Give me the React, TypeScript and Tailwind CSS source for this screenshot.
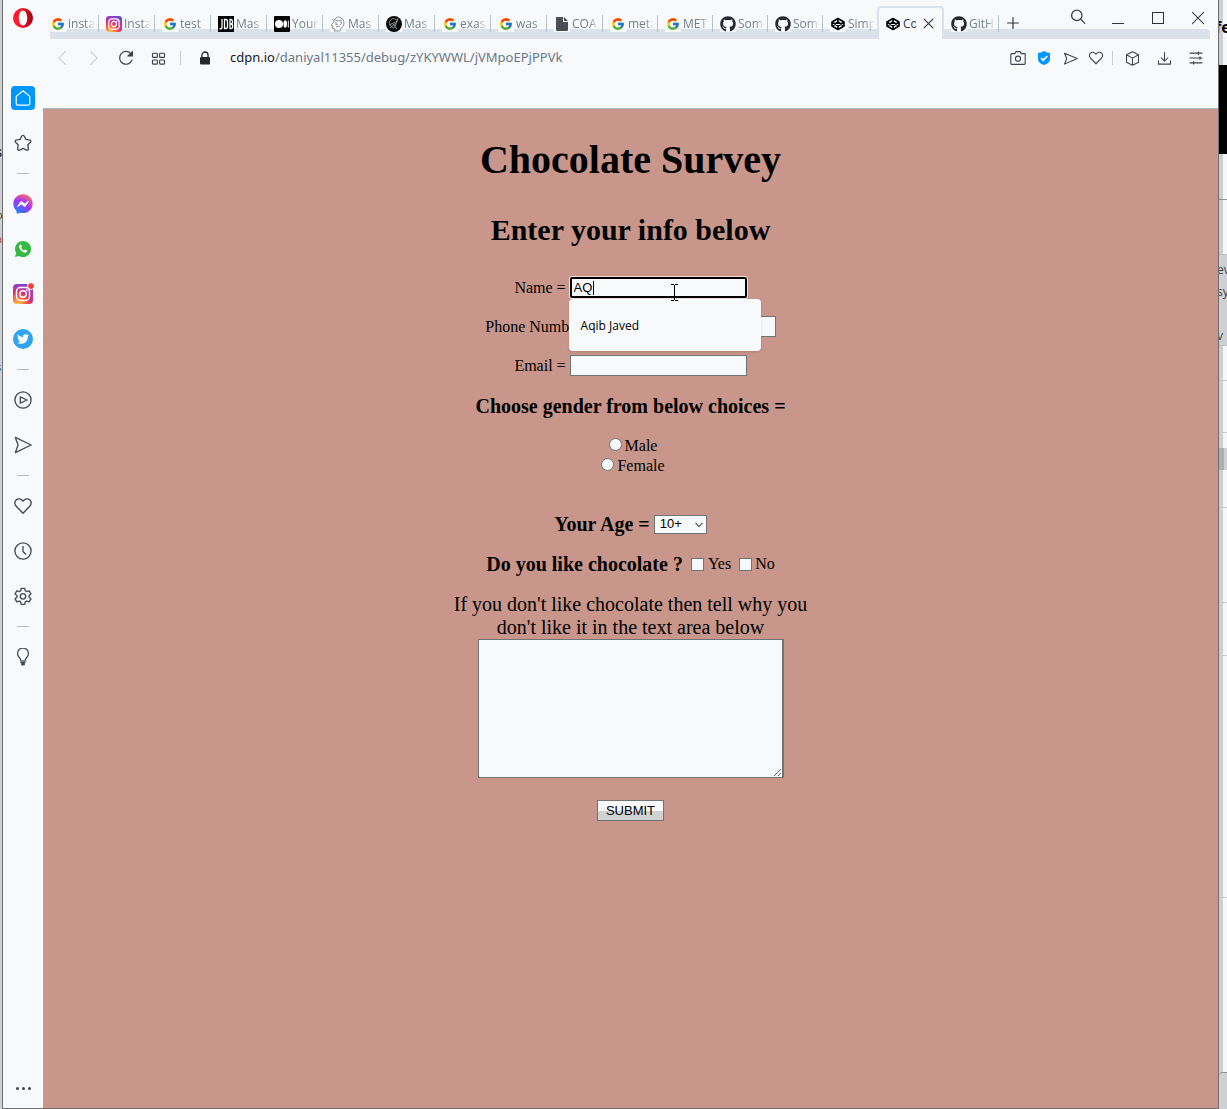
import React from "react";
import { FcGoogle } from "react-icons/fc";
import { FaGithub, FaTwitter, FaFacebookMessenger } from "react-icons/fa";

type IconProps = { children: React.ReactNode; size?: string; w?: number };

function Line({ children, size = "size-5", w = 1.2 }: IconProps) {
  return (
    <svg viewBox="0 0 20 20" className={size} fill="none" stroke="currentColor" strokeWidth={w} strokeLinejoin="round" strokeLinecap="round" aria-hidden="true">
      {children}
    </svg>
  );
}

const heartPath = "M10 17.2 3.2 10.2C1.3 8.2 1.4 5.4 3.1 3.9 5 2.2 8 2.5 10 5.2 12 2.5 15 2.2 16.9 3.9 18.6 5.4 18.7 8.2 16.8 10.2Z";
const sendPath = "M1.5 1.5 19 10 1.5 18.500 4.500 10Z";

function InstagramLogo({ size }: { size: string }) {
  return (
    <svg viewBox="0 0 20 20" className={size} aria-hidden="true">
      <defs>
        <radialGradient id="ig" cx="0.25" cy="1.05" r="1.15">
          <stop offset="0" stopColor="#ffd45a" />
          <stop offset="0.28" stopColor="#fd7f3c" />
          <stop offset="0.55" stopColor="#e0306c" />
          <stop offset="0.8" stopColor="#a837c0" />
          <stop offset="1" stopColor="#5a4fd0" />
        </radialGradient>
      </defs>
      <rect width="20" height="20" rx="4" fill="url(#ig)" />
      <rect x="3.5" y="3.5" width="13" height="13" rx="4" fill="none" stroke="#fff" strokeWidth="1.5" />
      <circle cx="10" cy="10" r="3.2" fill="none" stroke="#fff" strokeWidth="1.5" />
      <circle cx="13.9" cy="6.2" r="0.9" fill="#fff" />
    </svg>
  );
}

function JdbLogo() {
  return (
    <svg viewBox="0 0 16 16" className="size-4" aria-hidden="true">
      <rect width="16" height="16" fill="#000" />
      <path d="M4 3v8.500q0 1.500-2.500 1.200M6.500 3.500v9h1q2 0 2-2v-5q0-2-2-2zM12 3.500v9h1q1.700 0 1.700-2.200T13 8q1.500 0 1.500-2.200T13 3.500zM12 8h1" fill="none" stroke="#fff" strokeWidth="1.3" />
    </svg>
  );
}

function MediumLogo() {
  return (
    <svg viewBox="0 0 16 16" className="size-4" aria-hidden="true">
      <rect width="16" height="16" rx="1" fill="#000" />
      <circle cx="5" cy="8" r="4" fill="#fff" />
      <ellipse cx="11.2" cy="8" rx="1.8" ry="3.7" fill="#fff" />
      <rect x="13.8" y="4.5" width="1" height="7" fill="#fff" />
    </svg>
  );
}

function SketchLogo() {
  return (
    <svg viewBox="0 0 16 16" className="size-4" fill="none" stroke="#8b8b8b" strokeWidth="0.9" aria-hidden="true">
      <path d="M4 4Q8-1 11 2q3 1 3 5 0 4-3 5l-1 3H4l1-2-3-1 1-2-2-1 3-3zM5 4l3 1 4-1M6 6v3l2-1M10 6l2 1-2 2M6 11l4-1M2 3l2 2" />
    </svg>
  );
}

function KnotLogo() {
  return (
    <svg viewBox="0 0 16 16" className="size-4" aria-hidden="true">
      <circle cx="8" cy="8" r="8" fill="#080808" />
      <path d="M4 5q2-4 5-2t3 0-2 5-5 2-1-5zM3 9l9-4M7 8l4 5M4 12l6-5" fill="none" stroke="#a5a5a5" strokeWidth="0.8" />
    </svg>
  );
}

function PageLogo() {
  return (
    <svg viewBox="0 0 16 16" className="size-4" fill="#4b4e50" aria-hidden="true">
      <path d="M3 1h6v5h5v8q0 1-1 1H3q-1 0-1-1V2q0-1 1-1zM10 1l4 4h-4z" />
    </svg>
  );
}

function CodepenLogo() {
  return (
    <svg viewBox="0 0 16 16" className="size-4 shrink-0" fill="none" stroke="#000" strokeWidth="1.6" strokeLinejoin="round" aria-hidden="true">
      <path d="M8 2.500 14 6v4l-6 3.500L2 10V6zM2 6l6 4 6-4M2 10l6-4 6 4M8 2.500V6M8 10v3.500" />
    </svg>
  );
}

function OperaLogo() {
  return (
    <svg viewBox="0 0 20 20" className="size-5" aria-label="Opera" role="img">
      <defs>
        <linearGradient id="op" x1="0" x2="1">
          <stop offset="0.3" stopColor="#ff1b2d" />
          <stop offset="1" stopColor="#a3000f" />
        </linearGradient>
      </defs>
      <path fillRule="evenodd" fill="url(#op)" d="M10 0a10 10 0 1 1 0 20 10 10 0 0 1 0-20zM10 2.500c-2.500 0-4.200 3.200-4.200 7.500s1.700 7.500 4.200 7.500 4.200-3.200 4.200-7.500-1.700-7.500-4.200-7.500z" />
    </svg>
  );
}

const google = <FcGoogle className="size-[14px]" />;
const github = <FaGithub className="size-4 text-[#24292f]" />;

const wideTabs: [React.ReactNode, string][] = [
  [google, "insta"],
  [<InstagramLogo size="size-4" />, "Insta"],
  [google, "test"],
  [<JdbLogo />, "Mas"],
  [<MediumLogo />, "Your"],
  [<SketchLogo />, "Mas"],
  [<KnotLogo />, "Mas"],
  [google, "exas"],
  [google, "was"],
  [<PageLogo />, "COA"],
];
const narrowTabs: [React.ReactNode, string][] = [
  [google, "meta"],
  [google, "MET"],
  [github, "Som"],
  [github, "Som"],
  [<CodepenLogo />, "Simp"],
];

function Tab({ icon, label, wide, last }: { icon: React.ReactNode; label: string; wide?: boolean; last?: boolean }) {
  return (
    <button className={`${wide ? "w-14" : "w-[55px]"} flex h-full shrink-0 items-center pt-2 pl-[7px] text-left`}>
      <span className="flex size-4 shrink-0 items-center justify-center bg-[#f7f9fb]">{icon}</span>
      <span className="ml-[2px] flex h-4 flex-1 items-center overflow-hidden whitespace-nowrap text-[12px] text-[#717f8c] [mask-image:linear-gradient(to_right,black_65%,transparent)]">{label}</span>
      <span className={`ml-[3px] h-[17px] w-px ${last ? "bg-transparent" : "bg-[#b4c2cf]"}`} />
    </button>
  );
}

function TabStrip() {
  return (
    <div className="relative flex h-[39px] shrink-0">
      <div className="absolute right-2 bottom-0 left-[7px] h-[10px] rounded-tr-sm bg-[#dbe2e9]" />
      <div className="relative flex min-w-0 flex-1">
        {wideTabs.map(([icon, label], i) => (
          <Tab key={i} icon={icon} label={label} wide />
        ))}
        {narrowTabs.map(([icon, label], i) => (
          <Tab key={i} icon={icon} label={label} last={i === 4} />
        ))}
        <div className="mt-[6px] -ml-px flex w-[67px] shrink-0 items-center rounded-t border-2 border-b-0 border-[#dbe2e9] bg-[#f7f9fb] pl-[6px]">
          <CodepenLogo />
          <span className="ml-[2px] w-[13px] overflow-hidden text-[12px] whitespace-nowrap text-[#30343a]">Cod</span>
          <button aria-label="Close tab" className="ml-[7px] text-[#30343a]">
            <Line size="size-[11px]" w={2}><path d="M2 2 18 18M18 2 2 18" /></Line>
          </button>
        </div>
        <Tab icon={github} label="GitH" />
        <button aria-label="New tab" className="ml-2 pt-[6px] text-[#30343a]">
          <Line size="size-3" w={2}><path d="M10 1V19M1 10H19" /></Line>
        </button>
      </div>
      <div className="relative flex h-9 shrink-0 text-[#3b3f46]">
        <button aria-label="Search tabs" className="flex w-10 items-center justify-center pb-[2px]">
          <Line size="size-4" w={1.6}><circle cx="8.5" cy="8" r="6.5" /><path d="m13.300 12.700 5.200 5.300" /></Line>
        </button>
        <button aria-label="Minimize" className="flex w-10 items-center justify-center pt-[11px]"><span className="h-px w-3 bg-[#30343a]" /></button>
        <button aria-label="Maximize" className="flex w-10 items-center justify-center"><span className="size-3 border border-[#30343a]" /></button>
        <button aria-label="Close window" className="flex w-10 items-center justify-center">
          <Line size="size-[14px]" w={1.5}><path d="M2 2 18 18M18 2 2 18" /></Line>
        </button>
      </div>
    </div>
  );
}

function AddressBar() {
  return (
    <div className="flex h-[38px] shrink-0 items-center pr-[6px] pl-[3px] text-[#3b444e]">
      <button aria-label="Back" className="flex w-8 justify-center text-[#c3c9cf]"><Line size="size-4" w={1.3}><path d="M14 2 6 10l8 8" /></Line></button>
      <button aria-label="Forward" className="flex w-8 justify-center text-[#c3c9cf]"><Line size="size-4" w={1.3}><path d="m6 2 8 8-8 8" /></Line></button>
      <button aria-label="Reload" className="flex w-8 justify-center">
        <Line size="size-4" w={1.5}><path d="M17.500 12.500A8 8 0 1 1 16 4.500" /><path d="M18 2v5.500h-5.500z" fill="currentColor" /></Line>
      </button>
      <button aria-label="Speed dial" className="flex w-8 justify-center">
        <Line size="size-[15px]" w={1.5}><rect x="2" y="3" width="6.5" height="5.5" rx="1" /><rect x="11.5" y="3" width="6.5" height="5.5" rx="1" /><rect x="2" y="12" width="6.5" height="5.5" rx="1" /><rect x="11.5" y="12" width="6.5" height="5.5" rx="1" /></Line>
      </button>
      <span className="ml-[6px] h-[14px] w-px bg-[#c9ced3]" />
      <svg viewBox="0 0 12 16" className="ml-[18px] h-4 w-3 text-[#25282c]" aria-label="Secure" role="img">
        <rect x="1" y="7" width="10" height="7.5" rx="1" fill="currentColor" />
        <path d="M3 8V5a3 3 0 0 1 6 0v3" fill="none" stroke="currentColor" strokeWidth="1.3" />
      </svg>
      <div className="ml-[19px] min-w-0 flex-1 truncate font-['Noto_Sans',sans-serif] text-[13px] text-[#6b7886]">
        <span className="text-[#16191c]">cdpn.io</span>/daniyal11355/debug/zYKYWWL/jVMpoEPjPPVk
      </div>
      <button aria-label="Snapshot" className="flex w-[26px] justify-center">
        <Line size="size-4" w={1.4}><path d="M2 4.500h4L7.500 2h5L14 4.500h4q1 0 1 1V17q0 1-1 1H2q-1 0-1-1V5.500q0-1 1-1z" /><circle cx="10" cy="10.8" r="3.2" /></Line>
      </button>
      <button aria-label="Ad blocker" className="flex w-[26px] justify-center">
        <svg viewBox="0 0 14 16" className="h-4 w-[14px]"><path d="M7 1q3 2 6 2v6q0 4-6 6-6-2-6-6V3q3 0 6-2z" fill="#0096ff" /><path d="m4 8 2.200 2.200L10.300 6" fill="none" stroke="#fff" strokeWidth="1.7" /></svg>
      </button>
      <button aria-label="Send" className="flex w-[26px] justify-center"><Line size="size-[15px]" w={1.4}><path d="M2 3 19 10 2 17.500 5 10z" /></Line></button>
      <button aria-label="Bookmark" className="flex w-[26px] justify-center"><Line size="size-4" w={1.4}><path d={heartPath} /></Line></button>
      <span className="mx-[3px] h-[14px] w-px bg-[#c9ced3]" />
      <button aria-label="Extensions" className="flex w-8 justify-center"><Line size="size-[15px]" w={1.4}><path d="m10 1 8 4v10l-8 4-8-4V5zM2 5l8 4.500L18 5M10 9.500V19" /></Line></button>
      <button aria-label="Downloads" className="flex w-8 justify-center"><Line size="size-[15px]" w={1.4}><path d="M10 2v11M5.500 9l4.500 4.500L14.500 9M2 13v4.500h16V13" /></Line></button>
      <button aria-label="Easy setup" className="flex w-8 justify-center"><Line size="size-4" w={1.5}><path d="M2.500 4h15M2.500 10h15M2.500 16h15M13 2.500v3M15 8.500v3M7 14.500v3" /></Line></button>
    </div>
  );
}

function Side({ label, children }: { label: string; children: React.ReactNode }) {
  return <button aria-label={label} className="flex h-[45px] w-full shrink-0 items-center justify-center">{children}</button>;
}

function Dash() {
  return <div className="flex h-4 w-full items-center justify-center"><span className="h-px w-3 bg-[#aebdcb]" /></div>;
}

function Sidebar() {
  return (
    <nav aria-label="Sidebar" className="flex w-10 shrink-0 flex-col items-center bg-[#f7f9fb] pt-2 text-[#414d59]">
      <OperaLogo />
      <div className="h-[47px]" />
      <Side label="Speed dial">
        <span className="flex size-6 items-center justify-center rounded-sm bg-[#0096ff] text-white">
          <Line size="size-4" w={1.5}><path d="M10 1 18.500 8v9q0 2-2 2h-13q-2 0-2-2V8z" /></Line>
        </span>
      </Side>
      <Side label="Bookmarks">
        <Line size="size-[18px]" w={1.5}><path d="M8.600 2.300q1.400-1.600 2.800 0L13.200 6l4.600.8q1.500.9.500 2.300L15.400 12l.6 4.800q-.3 1.500-2 1.200L10 16l-4 2q-1.700.3-2-1.200l.6-4.800L1.700 9.100q-1-1.400.5-2.300L6.800 6z" /></Line>
      </Side>
      <Dash />
      <Side label="Messenger">
        <svg width="0" height="0" className="absolute"><defs><radialGradient id="ms" cx="0.2" cy="1" r="1.1"><stop offset="0" stopColor="#0a8fff" /><stop offset="0.6" stopColor="#a035ff" /><stop offset="1" stopColor="#ff6968" /></radialGradient></defs></svg>
        <FaFacebookMessenger className="size-5 [&_path]:fill-[url(#ms)]" />
      </Side>
      <Side label="WhatsApp">
        <svg viewBox="0 0 18 18" className="size-[18px]"><path d="M9 1a8 8 0 1 1-4 14.900L1 17l1.100-4A8 8 0 0 1 9 1z" fill="#35b944" /><path d="M5.200 5.500q1-1.500 2-.8l.8 1.900-.8 1.200q1 2 2.800 2.600l1.100-1 2 1q.3 1.600-1.400 2.200-2 .5-4.600-1.900Q4.500 8 5.200 5.500z" fill="#fff" /></svg>
      </Side>
      <Side label="Instagram">
        <span className="relative"><InstagramLogo size="size-5" /><span className="absolute -top-px -right-px size-[6px] rounded-full bg-[#ff3b30] outline-1 outline-[#f7f9fb]" /></span>
      </Side>
      <Side label="Twitter"><span className="flex size-5 items-center justify-center rounded-full bg-[#2ea3ef] text-white"><FaTwitter className="size-3" /></span></Side>
      <Dash />
      <Side label="Player"><Line size="size-[18px]" w={1.5}><circle cx="10" cy="10" r="9" /><path d="m7 6.500 7.500 3.500L7 13.500z" /></Line></Side>
      <Side label="My Flow"><Line size="size-[18px]" w={1.5}><path d={sendPath} /></Line></Side>
      <Dash />
      <Side label="Favorites"><Line size="size-5" w={1.4}><path d={heartPath} /></Line></Side>
      <Side label="History"><Line size="size-[18px]" w={1.5}><circle cx="10" cy="10" r="9" /><path d="M10 5v5.500l3 3" /></Line></Side>
      <Side label="Settings">
        <Line size="size-[18px]" w={1.5}><path d="M8 1.500h4l.5 2.700 1.700 1 2.600-1 2 3.500-2.100 1.700v1.900l2.100 1.800-2 3.400-2.600-.9-1.700 1-.5 2.700H8l-.5-2.700-1.700-1-2.600.9-2-3.400 2.100-1.800V9.400L1.200 7.700l2-3.500 2.600 1 1.700-1z" /><circle cx="10" cy="10.4" r="3" /></Line>
      </Side>
      <Dash />
      <Side label="Tips"><Line size="size-[18px]" w={1.4}><path d="M7.500 14.500q0-2.500-2-4.500a6 6 0 1 1 9 0q-2 2-2 4.500z" /><path d="M8 16.500h4M8.800 18.500h2.400" strokeWidth="1.8" /></Line></Side>
      <button aria-label="Sidebar setup" className="mt-auto mb-[18px] flex gap-[3px]">
        <span className="size-[3px] rounded-full bg-[#414446]" />
        <span className="size-[3px] rounded-full bg-[#414446]" />
        <span className="size-[3px] rounded-full bg-[#414446]" />
      </button>
    </nav>
  );
}

const plainField = "h-[21px] w-[177px] border border-[#6f7475] bg-[#f7f9fb] px-[3px] font-['Liberation_Sans',sans-serif] text-[13px] outline-none";
const focusedField = "h-[21px] w-[177px] rounded-xs border-2 border-black bg-[#f7f9fb] px-[2px] font-['Liberation_Sans',sans-serif] text-[13px] ring-1 ring-white/70 outline-none";
const radio = "mt-[2px] ml-[5px] size-[13px] appearance-none rounded-full border border-[#6f7475] bg-[#f7f9fb]";
const checkbox = "size-[13px] appearance-none border border-[#6f7475] bg-[#f7f9fb]";

function Survey() {
  return (
    <form onSubmit={(e) => e.preventDefault()} className="flex flex-1 flex-col items-center bg-[#c8968a] font-['Liberation_Serif',serif] text-[16px] leading-5 text-black">
      <h1 className="mt-7 text-[40px] leading-[46px] font-bold">Chocolate Survey</h1>
      <h2 className="mt-[30px] text-[30px] leading-[34px] font-bold">Enter your info below</h2>
      <div className="relative mt-[30px] flex items-center gap-1">
        <label htmlFor="name">Name =</label>
        <input id="name" defaultValue="AQ" className={focusedField} />
        <span className="absolute top-1 right-[153px] h-[14px] w-px bg-black" />
        <svg viewBox="0 0 7 17" className="absolute top-[7px] right-[69px] z-20 h-[17px] w-[7px]" fill="none" stroke="#000" aria-hidden="true">
          <path d="M0 .5h3M4 .5h3M3.500 1v15M0 16.500h3M4 16.500h3" />
        </svg>
        <div role="listbox" aria-label="Suggestions" className="absolute top-[22px] -right-[14px] z-10 flex h-[52px] w-48 items-center rounded-sm bg-[#f7f9fb] px-3 pt-[2px] font-['Open_Sans',sans-serif] text-[12px] shadow-sm">
          <div role="option" aria-selected="false">Aqib Javed</div>
        </div>
      </div>
      <div className="mt-[18px] flex items-center gap-1">
        <label htmlFor="phone">Phone Number =</label>
        <input id="phone" className={plainField} />
      </div>
      <div className="mt-[18px] flex items-center gap-1">
        <label htmlFor="email">Email =</label>
        <input id="email" className={plainField} />
      </div>
      <h3 className="mt-[18px] text-[20px] leading-6 font-bold">Choose gender from below choices =</h3>
      <label className="mt-[18px] flex gap-[3px]"><input type="radio" name="gender" className={radio} />Male</label>
      <label className="flex gap-[3px]"><input type="radio" name="gender" className={radio} />Female</label>
      <div className="mt-9 flex items-center gap-1">
        <label htmlFor="age" className="text-[20px] leading-6 font-bold">Your Age =</label>
        <span className="relative">
          <select id="age" className="block h-[19px] w-[53px] appearance-none border border-[#6f7475] bg-[#f7f9fb] pl-[5px] font-['Liberation_Sans',sans-serif] text-[13px] leading-4">
            <option>10+</option>
            <option>20+</option>
            <option>30+</option>
          </select>
          <svg viewBox="0 0 8 6" className="pointer-events-none absolute top-[7px] right-1 h-[6px] w-2" fill="none" stroke="#6c7072" strokeWidth="1.5" aria-hidden="true"><path d="m.5 1 3.500 3.500L7.500 1" /></svg>
        </span>
      </div>
      <div className="mt-4 flex items-center">
        <h3 className="text-[20px] leading-6 font-bold">Do you like chocolate ?</h3>
        <label className="ml-2 flex items-center gap-1"><input type="checkbox" className={checkbox} />Yes</label>
        <label className="ml-2 flex items-center gap-[3px]"><input type="checkbox" className={checkbox} />No</label>
      </div>
      <label htmlFor="why" className="mt-[17px] text-center text-[20px] leading-[23px]">
        If you don't like chocolate then tell why you<br />don't like it in the text area below
      </label>
      <textarea id="why" className="h-[139px] w-[306px] resize border border-r-2 border-[#6f7475] bg-[#f7f9fb] outline-none" />
      <button type="submit" className="mt-[22px] h-[21px] w-[67px] border border-[#6f7475] bg-[linear-gradient(#f7f9fb_50%,#cfd1d3_50%)] font-['Liberation_Sans',sans-serif] text-[13px] leading-[19px]">SUBMIT</button>
    </form>
  );
}

function LeftBackdrop() {
  return (
    <div aria-hidden="true" className="flex w-[2px] shrink-0 flex-col overflow-hidden bg-[#cfd0d4] pt-[145px] text-[11px] leading-4 text-[#333]">
      <span className="-ml-1 font-bold">S</span>
      <span className="-ml-1 mt-[46px]">o</span>
      <span className="-ml-1 mt-2 text-[#b04a4a]">a</span>
      <span className="-ml-1 mt-28">s</span>
    </div>
  );
}

function RightBackdrop() {
  return (
    <div aria-hidden="true" className="flex w-2 shrink-0 flex-col overflow-hidden bg-[linear-gradient(to_right,#cfd0d2_50%,#f7f7f9_50%)] text-[12px] leading-[22px] text-[#444]">
      <div className="-ml-1 h-[65px] pt-4 text-[16px] font-bold text-black">fe</div>
      <div className="h-[89px] bg-black" />
      <div className="h-[46px] border-b border-[#909296]" />
      <div className="mt-[54px] h-[92px] border-y border-[#bfc1c4] bg-[#cfd0d4] pt-1">
        <div className="-ml-[2px]">ev</div>
        <div className="-ml-[2px]">sy</div>
        <div className="mt-[22px] -ml-[2px]">v</div>
      </div>
      <div className="h-[35px] border-b border-[#c9cbce]" />
      <div className="h-[52px] border-b border-[#c9cbce]" />
      <div className="mt-[15px] h-[22px] bg-[linear-gradient(to_right,#acafb4_60%,#cfd0d2_60%)]" />
      <div className="h-[38px] border-b border-[#c9cbce]" />
      <div className="h-[95px] border-b border-[#c9cbce]" />
      <div className="h-[53px] border-b border-[#c9cbce]" />
      <div className="h-[242px] border-b border-[#c9cbce]" />
      <div className="mt-auto h-[37px] rounded-tl border-t border-[#909296] bg-[#cfd0d2]" />
    </div>
  );
}

export default function App() {
  return (
    <div className="flex min-h-screen bg-[#f7f9fb] font-['Open_Sans',sans-serif]">
      <LeftBackdrop />
      <div className="flex min-w-0 flex-1 border-r border-b border-l border-[#6d6e70]">
        <Sidebar />
        <div className="flex min-w-0 flex-1 flex-col">
          <TabStrip />
          <AddressBar />
          <div className="h-8 shrink-0 border-b border-[#a9bac6]" />
          <Survey />
        </div>
      </div>
      <RightBackdrop />
    </div>
  );
}
